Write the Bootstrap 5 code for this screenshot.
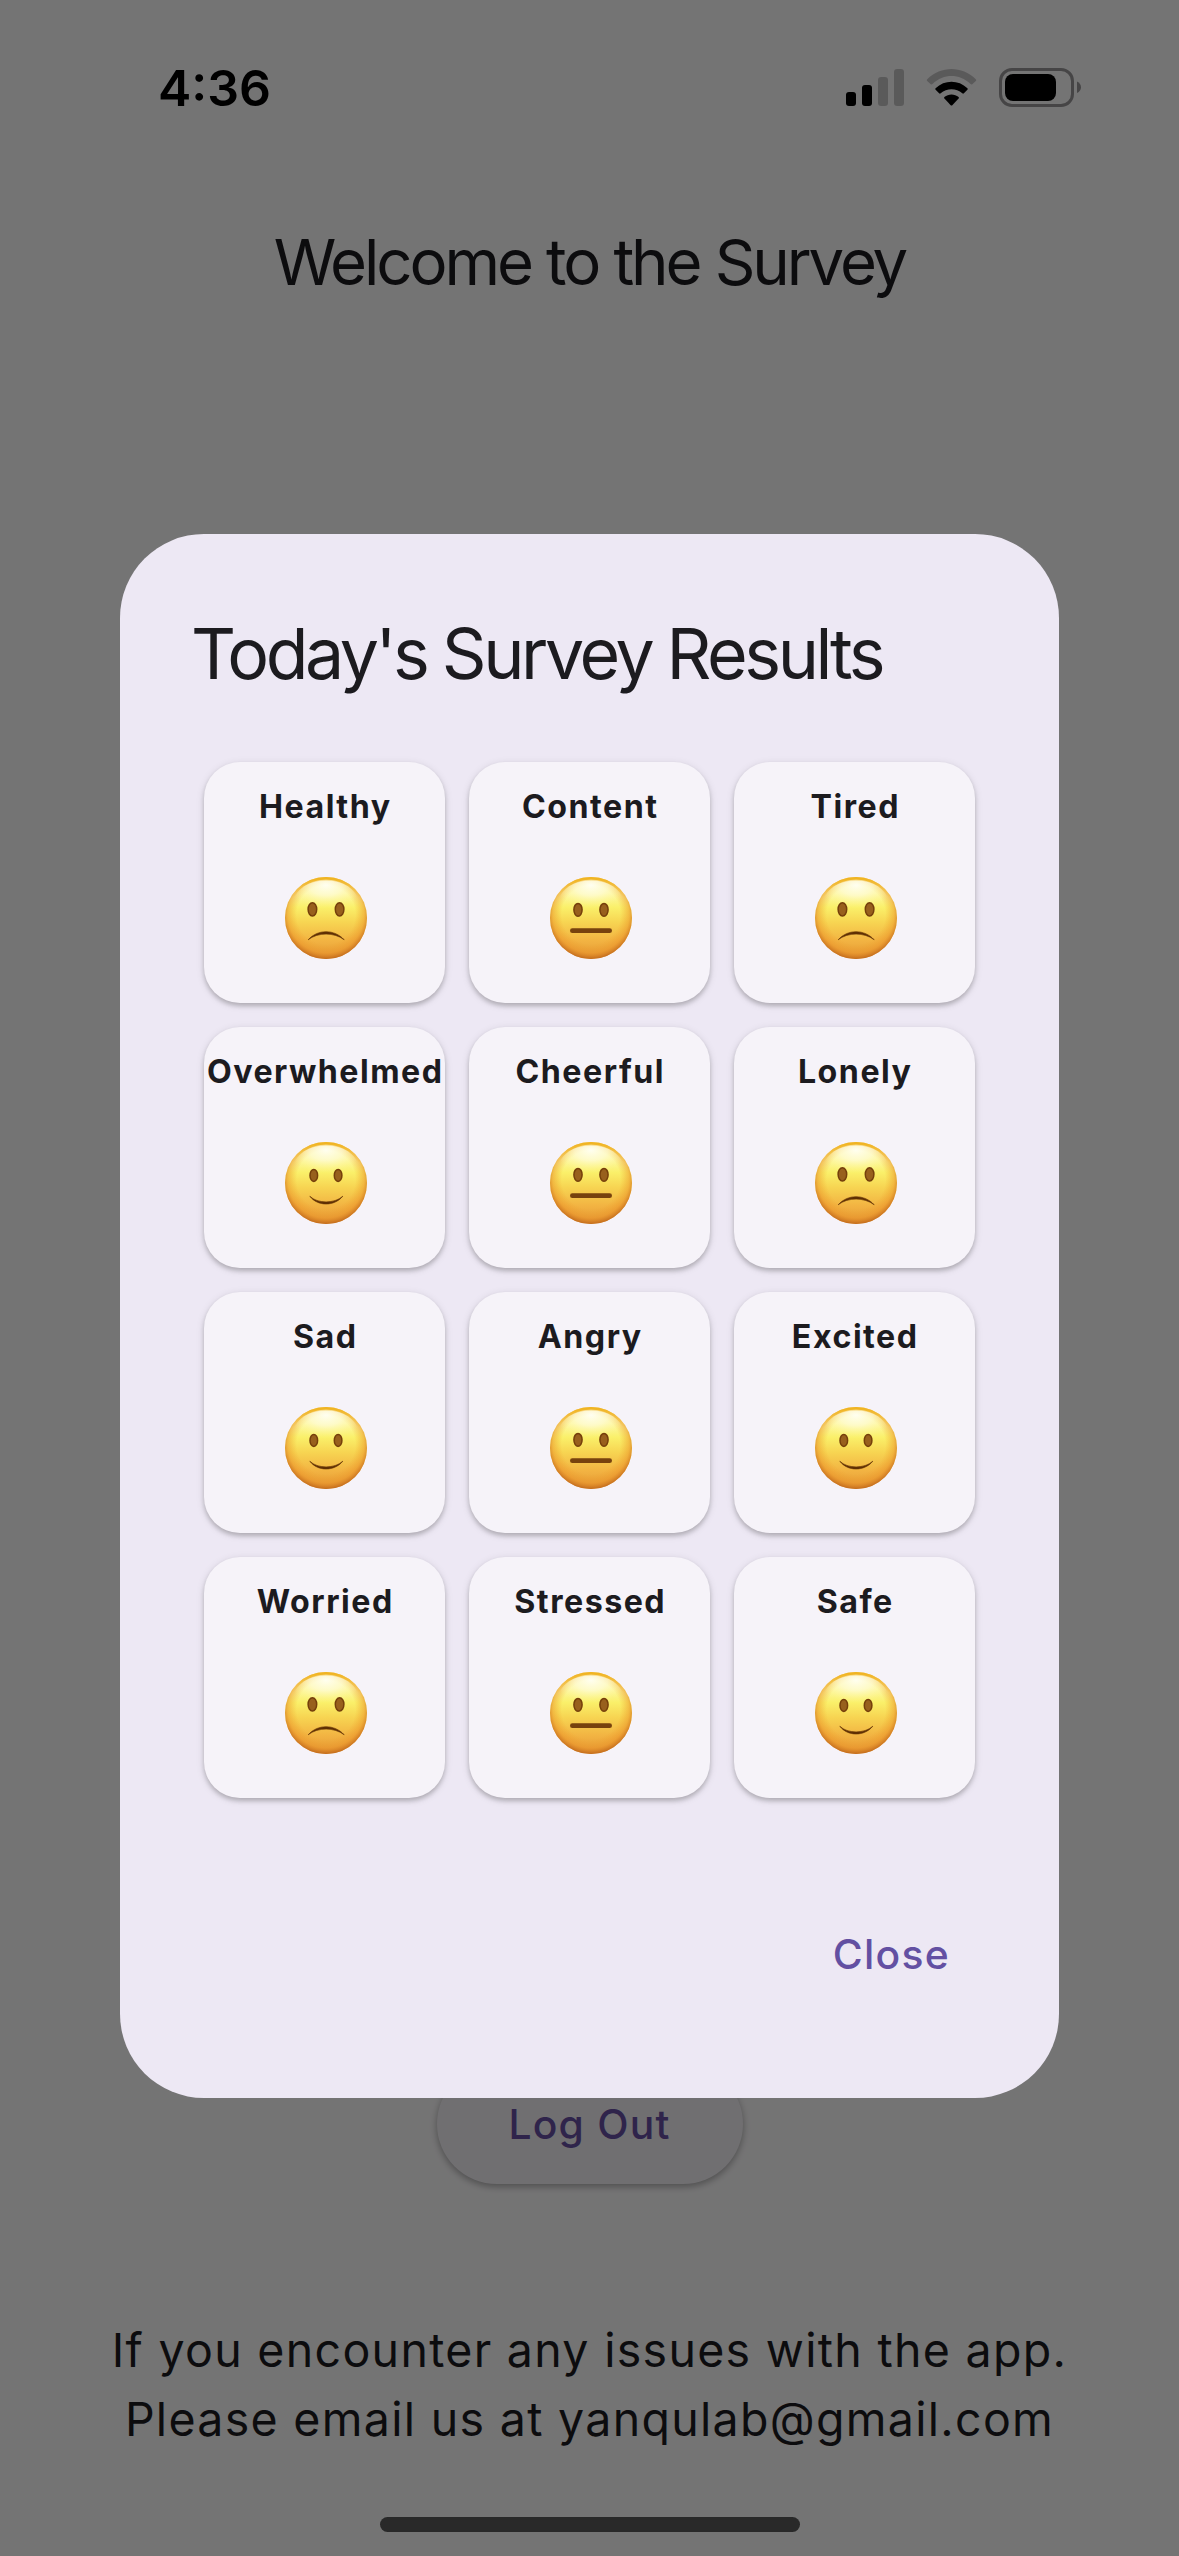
<!DOCTYPE html>
<html lang="en">
<head>
<meta charset="utf-8">
<meta name="viewport" content="width=device-width, initial-scale=1">
<title>Survey</title>
<link href="https://cdn.jsdelivr.net/npm/bootstrap@5.3.0/dist/css/bootstrap.min.css" rel="stylesheet">
<style>
  body { font-family: Inter, "Liberation Sans", sans-serif; background: #fdfcfd; color: #1c1b1f; width: 1179px; height: 2556px; overflow: hidden; }
  .app-screen { height: 2556px; }
  .status-bar { height: 176px; padding: 0 98px 0 158px; color: #000; }
  .clock { font-size: 50px; font-weight: 600; line-height: 60px; }
  .page-heading { height: 172px; line-height: 172px; font-size: 63.5px; font-weight: 400; letter-spacing: -3.1px; word-spacing: .5px; }
  .logout-btn { width: 306px; height: 120px; border: 0; border-radius: 60px; background: #f4f1f6; color: #6750a4; font-size: 40.8px; line-height: 120px; padding: 0; letter-spacing: 1.2px; font-weight: 450; box-shadow: 0 3px 6px rgba(0,0,0,.2), 0 2px 9px rgba(0,0,0,.14); }
  .help-text { margin: 131.5px 0 63.5px; font-size: 46.5px; line-height: 69px; letter-spacing: 1.3px; }
  .home-bar { width: 420px; height: 15px; border-radius: 8px; background: #5b5b5b; margin-bottom: 24px; }
  .scrim { position: absolute; inset: 0; height: 2556px; padding-top: 75px; background: rgba(0,0,0,.54); }
  .dialog { width: 939px; height: 1564px; border: 0; border-radius: 84px; background: #ede8f4; color: #1c1b1f; padding: 72px 0 114px; }
  .dialog-heading { margin: 0 0 61px 71px; font-size: 69.8px; line-height: 95px; font-weight: 400; letter-spacing: -3.4px; word-spacing: -1px; }
  .mood-grid { width: 771px; margin-left: 84px; }
  .mood-grid > .row { --bs-gutter-x: 24px; --bs-gutter-y: 24px; }
  .mood { height: 241px; border: 0; border-radius: 36px; background: #f6f3f9; color: #1c1b1f; padding-top: 21px; box-shadow: 0 3px 4px rgba(0,0,0,.18), 0 2px 8px rgba(0,0,0,.12); }
  .mood-name { font-size: 32.2px; line-height: 48px; font-weight: 650; letter-spacing: 1.5px; white-space: nowrap; margin-right: -1.5px; }
  .mood svg { width: 82px; height: 82px; margin: 46px 0 0 3px; }
  .close-btn { border: 0; padding: 0; margin-right: 109px; font-size: 40.8px; line-height: 60px; font-weight: 450; letter-spacing: 1.3px; color: #6350a2; }
</style>
<script src="https://cdn.jsdelivr.net/npm/bootstrap@5.3.0/dist/js/bootstrap.bundle.min.js"></script>
</head>
<body>
<svg width="0" height="0" class="position-absolute" aria-hidden="true">
  <defs>
    <linearGradient id="skin" x1="0" y1="0" x2="0" y2="1">
      <stop offset="0" stop-color="#fdf3a8"/><stop offset=".2" stop-color="#fdf7a4"/><stop offset=".37" stop-color="#faf06a"/>
      <stop offset=".55" stop-color="#f7d552"/><stop offset=".78" stop-color="#f2b342"/><stop offset="1" stop-color="#e39a38"/>
    </linearGradient>
    <radialGradient id="rim" cx=".5" cy=".46" r=".54">
      <stop offset=".66" stop-color="#ee9a25" stop-opacity="0"/><stop offset=".86" stop-color="#ea9026" stop-opacity=".48"/><stop offset="1" stop-color="#c0681c" stop-opacity=".95"/>
    </radialGradient>
    <radialGradient id="shine" cx=".5" cy=".12" r=".6">
      <stop offset="0" stop-color="#fffff4" stop-opacity=".95"/><stop offset=".45" stop-color="#fffde0" stop-opacity=".6"/><stop offset="1" stop-color="#fff88a" stop-opacity="0"/>
    </radialGradient>
    <linearGradient id="crown" x1="0" y1="0" x2="0" y2="1">
      <stop offset="0" stop-color="#f0b422"/><stop offset=".25" stop-color="#f0b422" stop-opacity="0"/>
    </linearGradient>
    <symbol id="head" viewBox="0 0 82 82">
      <circle cx="41" cy="41" r="41" fill="url(#skin)"/>
      <circle cx="41" cy="41" r="41" fill="url(#rim)"/>
      <circle cx="41" cy="41" r="39.7" fill="none" stroke="url(#crown)" stroke-width="2.6"/>
      <ellipse cx="41" cy="23" rx="31" ry="19.5" fill="url(#shine)"/>
    </symbol>
    <symbol id="sad" viewBox="0 0 82 82">
      <use href="#head"/>
      <g fill="#98601d" stroke="#753f0b" stroke-width="1.5"><ellipse cx="27.4" cy="32.3" rx="4.3" ry="6.6"/><ellipse cx="54.6" cy="32.3" rx="4.3" ry="6.6"/></g>
      <path d="M23.2 62.8C32.5 52 49.5 52 59.2 62.8C49.5 55.2 32.5 55.2 23.2 62.8Z" fill="#5f2f04" stroke="#5f2f04" stroke-width=".6" stroke-linejoin="round"/>
    </symbol>
    <symbol id="neutral" viewBox="0 0 82 82">
      <use href="#head"/>
      <g fill="#98601d" stroke="#753f0b" stroke-width="1.5"><ellipse cx="28" cy="32.8" rx="4.1" ry="6.4"/><ellipse cx="54" cy="32.8" rx="4.1" ry="6.4"/></g>
      <rect x="20" y="51.3" width="42" height="4.8" rx="2.4" fill="#77420e"/>
    </symbol>
    <symbol id="smile" viewBox="0 0 82 82">
      <use href="#head"/>
      <g fill="#98601d" stroke="#753f0b" stroke-width="1.5"><ellipse cx="28.8" cy="33.4" rx="3.8" ry="6"/><ellipse cx="53.1" cy="33.4" rx="3.8" ry="6"/></g>
      <path d="M24.8 54.2C32.5 64.6 49.5 64.6 57.8 54.2C49.5 61.8 32.5 61.8 24.8 54.2Z" fill="#5f2f04" stroke="#5f2f04" stroke-width=".6" stroke-linejoin="round"/>
    </symbol>
  </defs>
</svg>

<div class="app-screen d-flex flex-column align-items-center">
  <header class="status-bar w-100 d-flex justify-content-between align-items-center">
    <span class="clock">4:36</span>
    <svg width="236" height="40" viewBox="845 68 236 40" aria-label="Signal, Wi-Fi and battery">
      <rect x="846" y="92" width="10" height="14" rx="3"/>
      <rect x="862" y="85" width="10" height="21" rx="3"/>
      <rect x="878" y="77" width="10" height="29" rx="3" fill-opacity=".22"/>
      <rect x="894" y="69" width="10" height="37" rx="3" fill-opacity=".22"/>
      <path fill-opacity=".22" d="M927.2 79.2C941 65.6 962 65.6 975.8 79.2Q976.7 80 975.8 80.9L972.3 84.2Q971.5 84.8 970.5 84C959 73.4 944 73.4 932.5 84Q931.5 84.8 930.7 84.2L927.2 80.9Q926.3 80 927.2 79.2Z"/>
      <path d="M935.6 88.2C944.5 79.6 958.5 79.6 967.4 88.2Q968.2 89 967.4 89.8L963.9 93.3Q963.1 94 962.3 93.3C956.3 87.9 946.7 87.9 940.7 93.3Q939.9 94 939.1 93.3L935.6 89.8Q934.8 89 935.6 88.2Z"/>
      <path d="M944.4 97C948.5 93.5 954.5 93.5 958.6 97Q959.3 97.8 958.6 98.6L952.3 105.2Q951.5 106 950.7 105.2L944.4 98.6Q943.7 97.8 944.4 97Z"/>
      <rect x="1000.5" y="69.5" width="72" height="36" rx="11.5" fill="none" stroke="#000" stroke-opacity=".4" stroke-width="3"/>
      <rect x="1005" y="74" width="51" height="27" rx="8"/>
      <path fill-opacity=".4" d="M1077 81.5C1082.3 84 1082.3 90.5 1077 93Z"/>
    </svg>
  </header>
  <h1 class="page-heading m-0">Welcome to the Survey</h1>
  <button class="btn logout-btn mt-auto">Log Out</button>
  <p class="help-text text-center">If you encounter any issues with the app.<br>Please email us at yanqulab@gmail.com</p>
  <div class="home-bar"></div>
</div>

<div class="scrim d-flex align-items-center justify-content-center">
  <section class="dialog d-flex flex-column" role="dialog" aria-labelledby="resultsHeading">
    <h2 id="resultsHeading" class="dialog-heading">Today's Survey Results</h2>
    <div class="mood-grid">
      <div class="row row-cols-3">
        <div class="col"><div class="card mood align-items-center"><span class="mood-name">Healthy</span><svg><use href="#sad"/></svg></div></div>
        <div class="col"><div class="card mood align-items-center"><span class="mood-name">Content</span><svg><use href="#neutral"/></svg></div></div>
        <div class="col"><div class="card mood align-items-center"><span class="mood-name">Tired</span><svg><use href="#sad"/></svg></div></div>
        <div class="col"><div class="card mood align-items-center"><span class="mood-name">Overwhelmed</span><svg><use href="#smile"/></svg></div></div>
        <div class="col"><div class="card mood align-items-center"><span class="mood-name">Cheerful</span><svg><use href="#neutral"/></svg></div></div>
        <div class="col"><div class="card mood align-items-center"><span class="mood-name">Lonely</span><svg><use href="#sad"/></svg></div></div>
        <div class="col"><div class="card mood align-items-center"><span class="mood-name">Sad</span><svg><use href="#smile"/></svg></div></div>
        <div class="col"><div class="card mood align-items-center"><span class="mood-name">Angry</span><svg><use href="#neutral"/></svg></div></div>
        <div class="col"><div class="card mood align-items-center"><span class="mood-name">Excited</span><svg><use href="#smile"/></svg></div></div>
        <div class="col"><div class="card mood align-items-center"><span class="mood-name">Worried</span><svg><use href="#sad"/></svg></div></div>
        <div class="col"><div class="card mood align-items-center"><span class="mood-name">Stressed</span><svg><use href="#neutral"/></svg></div></div>
        <div class="col"><div class="card mood align-items-center"><span class="mood-name">Safe</span><svg><use href="#smile"/></svg></div></div>
      </div>
    </div>
    <button class="btn close-btn align-self-end mt-auto">Close</button>
  </section>
</div>
</body>
</html>
